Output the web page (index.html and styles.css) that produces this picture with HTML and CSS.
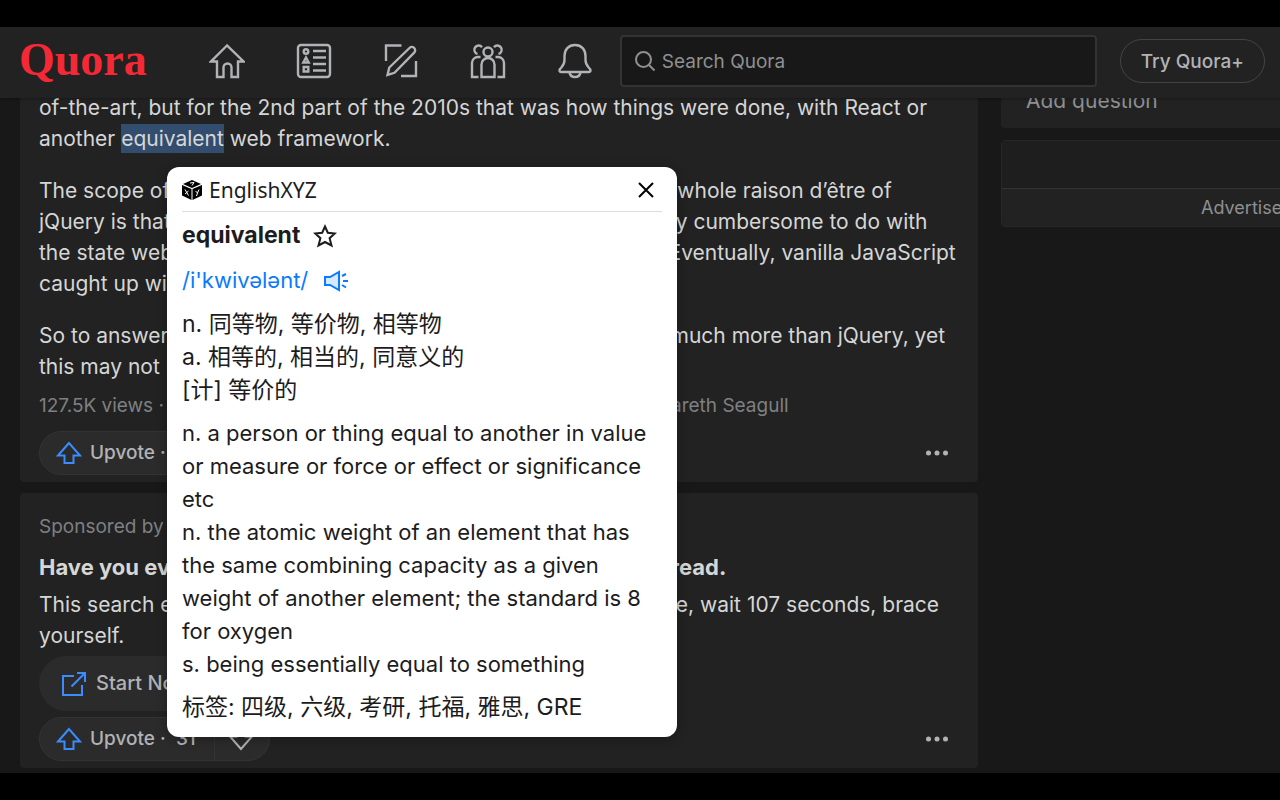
FILE: index.html
```html
<!DOCTYPE html>
<html lang="en">
<head>
  <meta charset="UTF-8" />
  <meta name="viewport" content="width=device-width, initial-scale=1.0" />
  <title>Quora</title>
  <link rel="stylesheet" href="styles.css">
</head>
<body>
  <div class="app">
    <header class="navbar">
      <a href="#" class="logo">Quora</a>
      <nav class="nav-links">
        <a href="#" aria-label="Home">
          <svg class="nav-icon" viewBox="0 0 36 36"><path d="M18 2.500 2 18.500h6V34h6.500v-9.500a4 4 0 0 1 8 0V34H29V18.500h5.500z"/></svg>
        </a>
        <a href="#" aria-label="Following">
          <svg class="nav-icon" viewBox="0 0 36 36"><rect x="2" y="2" width="32" height="32" rx="3"/><circle cx="10" cy="8.500" r="2.300"/><path d="m10 14.500 2.700 5H7.300zM7.700 24h4.600v4.500H7.700zM17 8h13M17 14.500h13M17 21h13M17 27.500h13"/></svg>
        </a>
        <a href="#" aria-label="Answer">
          <svg class="nav-icon" viewBox="0 0 36 36"><path d="M3 18V2.500h15.500M18 33h15V18M4.500 32l1.800-7.500L26.500 5a3.300 3.300 0 0 1 4.700 4.700L11.500 29.800z"/></svg>
        </a>
        <a href="#" aria-label="Spaces">
          <svg class="nav-icon" viewBox="0 0 36 36"><circle cx="18" cy="9" r="4.500"/><path d="M11.500 34V21.500a6.500 6.500 0 0 1 13 0V34zM8.500 34H2V20a6 6 0 0 1 6-6h2.500M27.500 34H34V20a6 6 0 0 0-6-6h-2.500M7.500 11A4.300 4.300 0 1 1 12 4.200M28.500 11A4.300 4.300 0 1 0 24 4.200"/></svg>
        </a>
        <a href="#" aria-label="Notifications">
          <svg class="nav-icon" viewBox="0 0 36 36"><path d="M18 2C11.500 2 7.500 6.500 7.500 13v4c0 5-2 6-4.500 9-1 1.500-.500 3 1 3h28c1.500 0 2-1.500 1-3-2.500-3-4.500-4-4.500-9v-4C28.500 6.500 24.500 2 18 2zM12.500 29.500c1 6 10 6 11 0"/></svg>
        </a>
      </nav>
      <label class="search">
        <svg class="search-icon" viewBox="0 0 22 22"><circle cx="9.500" cy="9.500" r="7.500"/><path d="m15 15 5.500 5.500"/></svg>
        <input type="text" placeholder="Search Quora" aria-label="Search Quora" />
      </label>
      <button class="try-button">Try Quora+</button>
    </header>

    <div class="page">
      <main class="feed">
        <article class="card answer">
          <p>of-the-art, but for the 2nd part of the 2010s that was how things were done, with React or<br>another <mark>equivalent</mark> web framework.</p>
          <p>The scope of jQuery is not as robust as the scope of React. The whole raison d’être of<br>jQuery is that it lets you do common things which used to be very cumbersome to do with<br>the state web browsers were in when it was first being formed. Eventually, vanilla JavaScript<br>caught up with it.</p>
          <p>So to answer the question, React will let you build on a page so much more than jQuery, yet<br>this may not be what you need.</p>
          <div class="meta">127.5K views · View 24 upvotes · View shares · Answer requested by Gareth Seagull</div>
          <div class="actions">
            <div class="vote">
              <button class="upvote"><svg class="arrow" viewBox="0 0 26 24"><path d="M13 2 2 14.500h6.500V22h9v-7.500H24z"/></svg>Upvote · 1.2K</button>
              <button class="downvote" aria-label="Downvote"><svg class="arrow" viewBox="0 0 26 24"><path d="M13 22 2 9.500h6.500V2h9v7.500H24z"/></svg></button>
            </div>
            <button class="more" aria-label="More"><svg viewBox="0 0 24 8"><circle cx="3.500" cy="4" r="2.500"/><circle cx="12" cy="4" r="2.500"/><circle cx="20.500" cy="4" r="2.500"/></svg></button>
          </div>
        </article>

        <article class="card sponsored">
          <div class="meta">Sponsored by TruthFinder</div>
          <h2>Have you ever searched for yourself online? Stop and then read.</h2>
          <p>This search engine today reveals so much more. Enter your name, wait 107 seconds, brace<br>yourself.</p>
          <a href="#" class="start"><svg class="open" viewBox="0 0 26 26"><path d="M13 5H2v19h19V14M10.500 15.500 24 2M16 2h8v9"/></svg>Start Now</a>
          <div class="actions">
            <div class="vote">
              <button class="upvote"><svg class="arrow" viewBox="0 0 26 24"><path d="M13 2 2 14.500h6.500V22h9v-7.500H24z"/></svg>Upvote ·&nbsp; 31</button>
              <button class="downvote" aria-label="Downvote"><svg class="arrow" viewBox="0 0 26 24"><path d="M13 22 2 9.500h6.500V2h9v7.500H24z"/></svg></button>
            </div>
            <button class="more" aria-label="More"><svg viewBox="0 0 24 8"><circle cx="3.500" cy="4" r="2.500"/><circle cx="12" cy="4" r="2.500"/><circle cx="20.500" cy="4" r="2.500"/></svg></button>
          </div>
        </article>
      </main>

      <aside class="sidebar">
        <div class="card add-question">Add question</div>
        <div class="card ad">
          <div class="ad-slot"></div>
          <div class="ad-label">Advertisement</div>
        </div>
      </aside>
    </div>
  </div>

  <!-- Dictionary popup -->
  <section class="popup">
    <div class="popup-header">
      <svg class="cube" viewBox="0 0 20 20">
        <path d="M10 0 19 4 10 8 1 4zM0 5l9.500 4v11L0 15.500zM20 5l-9.500 4v11l9.500-4.500z"/>
        <path class="cube-mark" d="m8 3 4-.500-2 3M3 9.500l3.500 6M6.500 11 3 14M13.500 11l2 2 1.500-3.500M15.500 13l-1 3"/>
      </svg>
      <span>EnglishXYZ</span>
      <button class="close" aria-label="Close"><svg viewBox="0 0 18 18"><path d="m2 2 14 14M16 2 2 16"/></svg></button>
    </div>
    <div class="word">
      <h1>equivalent</h1>
      <button aria-label="Save word"><svg class="star" viewBox="0 0 24 24"><path d="m12 2.500 2.800 6.200 7 .800-5.200 4.700 1.900 7.300-6.500-3.500-6.500 3.500 1.900-7.300-5.200-4.700 7-.800z"/></svg></button>
    </div>
    <div class="phonetic">
      <span>/i'kwivələnt/</span>
      <button aria-label="Play"><svg class="speaker" viewBox="0 0 26 24"><path class="cone" d="M2 8h5l9-5v18l-9-5H2z"/><path d="m19 7 4-2M20 12h5M19 16l4 2.500"/></svg></button>
    </div>
    <p lang="zh">n. 同等物, 等价物, 相等物<br>a. 相等的, 相当的, 同意义的<br>[计] 等价的</p>
    <p>n. a person or thing equal to another in value or measure or force or effect or significance etc<br>n. the atomic weight of an element that has the same combining capacity as a given weight of another element; the standard is 8 for oxygen<br>s. being essentially equal to something</p>
    <p lang="zh">标签: 四级, 六级, 考研, 托福, 雅思, GRE</p>
  </section>
</body>
</html>
```
FILE: styles.css
```css
* {
  box-sizing: border-box;
}

body {
  margin: 0;
  padding: 27px 0;
  background: #000;
  color: #d5d6d6;
  font-family: Inter, "Noto Sans CJK SC", sans-serif;
  font-size: 21px;
  line-height: 31px;
  position: relative;
}

a {
  color: inherit;
  text-decoration: none;
}

button {
  padding: 0;
  border: none;
  background: none;
  color: inherit;
  font: inherit;
  cursor: pointer;
}

svg {
  display: block;
  fill: none;
  stroke: currentColor;
  stroke-width: 2;
}

p, h1, h2 {
  margin: 0;
}

.app {
  background: #181818;
  overflow: hidden;
  height: calc(100vh - 54px);
}

/* Navbar */
.navbar {
  position: relative;
  z-index: 1;
  display: flex;
  align-items: center;
  height: 71px;
  padding: 0 15px 3px 19px;
  background: #222;
  box-shadow: 0 1px 3px rgba(0, 0, 0, 0.3);
}

.logo {
  padding-bottom: 4px;
  color: #f52936;
  font-family: "Liberation Serif", serif;
  font-size: 46px;
  font-weight: bold;
}

.nav-links {
  display: flex;
  gap: 51px;
  margin: 0 27px 0 62px;
  color: #b1b3b6;
}

.nav-icon {
  width: 36px;
  height: 36px;
  stroke-width: 2.4;
}

.search {
  flex: 1;
  display: flex;
  align-items: center;
  gap: 6px;
  height: 52px;
  padding: 0 12px;
  border: 2px solid #333;
  border-radius: 4px;
  background: #181818;
  color: #8e9092;
}

.search-icon {
  width: 22px;
  height: 22px;
}

.search input {
  flex: 1;
  min-width: 0;
  padding: 0;
  border: none;
  outline: none;
  background: none;
  color: #d5d6d6;
  font: inherit;
  font-size: 19px;
}

.search input::placeholder {
  color: #8e9092;
  opacity: 1;
}

.try-button {
  height: 44px;
  margin-left: 23px;
  padding: 0 20px;
  border: 1px solid #444;
  border-radius: 22px;
  color: #b1b3b6;
  font-size: 19px;
  font-weight: 500;
}

/* Feed */
.page {
  display: flex;
  gap: 23px;
  margin-top: -6px;
  padding-left: 20px;
}

.feed {
  flex: 1;
  min-width: 0;
}

.card {
  background: #222;
  border-radius: 4px;
}

.feed .card {
  margin-bottom: 11px;
  padding: 0 19px 8px;
  white-space: nowrap;
}

.answer p {
  margin-bottom: 21px;
}

mark {
  padding: 2px 0;
  background: #334d6e;
  color: inherit;
}

.meta {
  color: #7e8082;
  font-size: 19px;
}

.answer .meta {
  margin: -13px 0 10px;
}

.actions {
  display: flex;
  justify-content: space-between;
  align-items: center;
  height: 43px;
  color: #b1b3b6;
}

.vote {
  display: flex;
  height: 44px;
  border: 1px solid #333;
  border-radius: 22px;
  background: #2b2b2b;
}

.upvote {
  display: flex;
  align-items: center;
  gap: 8px;
  padding: 0 18px 0 16px;
  font-size: 19px;
  font-weight: 500;
}

.upvote svg {
  color: #3b8cff;
}

.downvote {
  padding: 0 15px 0 13px;
  border-left: 1px solid #333;
}

.arrow {
  width: 26px;
  height: 24px;
}

.more {
  margin-right: 10px;
}

.more svg {
  width: 24px;
  height: 8px;
  fill: currentColor;
  stroke: none;
}

.feed .sponsored {
  padding-top: 18px;
}

h2 {
  margin: 10px 0 6px;
  font-size: 22px;
  line-height: 31px;
}

.start {
  display: inline-flex;
  align-items: center;
  gap: 9px;
  height: 55px;
  margin: 5px 0 6px;
  padding: 0 28px 0 22px;
  border-radius: 28px;
  background: #2b2b2b;
  color: #b1b3b6;
  font-size: 20px;
  font-weight: 500;
  vertical-align: top;
}

.open {
  width: 26px;
  height: 26px;
  color: #3b8cff;
}

/* Sidebar */
.sidebar {
  width: 279px;
}

.sidebar .card {
  width: 524px;
  margin-bottom: 12px;
}

.add-question {
  padding: 0 25px 12px;
  height: 36px;
  line-height: 18px;
  color: #8e9092;
}

.ad {
  border: 1px solid #262626;
}

.ad-slot {
  height: 48px;
  background: #1e1e1e;
  border-bottom: 1px solid #333;
}

.ad-label {
  height: 37px;
  line-height: 37px;
  color: #8e9092;
  font-size: 18px;
  text-align: center;
}

/* Popup */
.popup {
  position: absolute;
  top: 167px;
  left: 167px;
  width: 510px;
  padding: 0 15px 13px;
  border-radius: 12px;
  background: #fff;
  box-shadow: 0 2px 12px rgba(0, 0, 0, 0.3);
  color: #1c1c1e;
  font-size: 22px;
  line-height: 33px;
}

.popup-header {
  display: flex;
  align-items: center;
  gap: 7px;
  height: 45px;
  padding-top: 2px;
  border-bottom: 1px solid #ddd;
  font-family: "Noto Sans", sans-serif;
  font-size: 21px;
}

.cube {
  width: 20px;
  height: 20px;
  fill: #000;
  stroke: none;
}

.cube-mark {
  fill: none;
  stroke: #fff;
  stroke-width: 1;
}

.close {
  margin-left: auto;
  padding-right: 7px;
  color: #000;
}

.close svg {
  width: 18px;
  height: 18px;
}

.word, .phonetic {
  display: flex;
  align-items: center;
}

.word {
  gap: 13px;
  margin-top: 7px;
}

h1 {
  font-size: 23px;
  font-weight: 700;
}

.star {
  width: 24px;
  height: 24px;
}

.phonetic {
  gap: 15px;
  margin: 12px 0 11px;
  color: #0a7aff;
}

.speaker {
  width: 26px;
  height: 24px;
}

.cone {
  fill: #d6eaff;
}

.popup p {
  margin-bottom: 10px;
}

.popup p:lang(zh) {
  font-size: 23px;
}

.popup p:last-child {
  margin-bottom: 0;
}
```
